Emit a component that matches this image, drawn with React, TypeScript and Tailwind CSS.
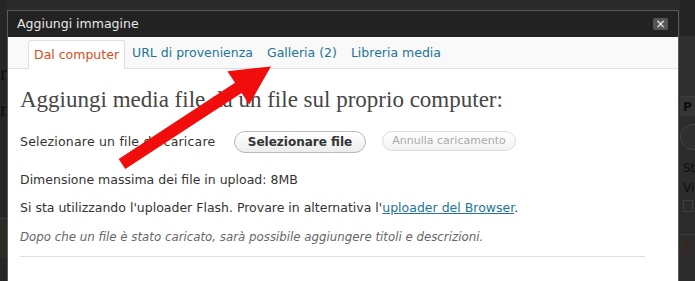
const tabs = ['URL di provenienza', 'Galleria (2)', 'Libreria media'];

function Arrow() {
    // red arrow drawn along x axis, then rotated into place
    return (
        <svg className="pointer-events-none absolute left-0 top-0" width="695" height="281">
            <g transform="translate(122 164) rotate(-33.2)">
                <polygon points="0,-6 139,-6 139,-20 178,0 139,20 139,6 0,6" fill="#f20d0d" />
            </g>
        </svg>
    );
}

export default function App() {
    return (
        <div className="relative flex h-[281px] w-[695px] overflow-hidden bg-[#2a2a2a] font-['DejaVu_Sans',sans-serif]">
            {/* dimmed page behind, left side */}
            <div className="flex w-[7px] shrink-0 flex-col bg-[#262626] pt-[62px] text-[22px] leading-none text-[#0d0d0d]">
                <div className="h-[36px] font-['Liberation_Serif',serif]">r</div>
                <div className="h-[40px] font-['Liberation_Serif',serif] text-[#111]">r</div>
                <div className="mt-[80px] h-[40px] border-t border-[#3a3a3a] bg-[#2e2a26]" />
            </div>

            {/* dialog */}
            <div className="mt-[10px] flex w-[672px] shrink-0 flex-col self-start border border-[#5a5a5a] bg-white">
                <div className="flex h-[26px] items-center justify-between bg-[#222] pl-[9px] pr-[10px]">
                    <span className="text-[12.5px] text-[#e8e8e8]">Aggiungi immagine</span>
                    <span className="flex h-[12px] w-[15px] items-center justify-center rounded-[2px] bg-[#555] text-[12px] leading-none text-white">×</span>
                </div>

                <div className="flex h-[32px] items-end border-b border-[#dfdfdf] bg-[#f9f9f9] pl-[20px]">
                    <div className="-mb-px flex h-[29px] items-center rounded-t-[3px] border border-b-0 border-[#dfdfdf] bg-white px-[5px] text-[12.5px] text-[#d54e21]">
                        Dal computer
                    </div>
                    {tabs.map((t) => (
                        <div key={t} className="flex h-[29px] items-center px-[7px] text-[12.5px] text-[#21759b]">
                            {t}
                        </div>
                    ))}
                </div>

                <div className="flex flex-col px-[12px] pb-[30px] text-[12.5px] text-[#333]">
                    <h3 className="mt-[17px] h-[28px] font-['Liberation_Serif',serif] text-[23px] leading-[28px] text-[#464646]">
                        Aggiungi media file da un file sul proprio computer:
                    </h3>
                    <div className="mt-[17px] flex h-[22px] items-center">
                        <span className="w-[214px] tracking-[0.2px]">Selezionare un file da caricare</span>
                        <button className="flex h-[22px] w-[132px] items-center justify-center rounded-full border border-[#bbb] bg-gradient-to-b from-white to-[#ececec] text-[12px] font-bold text-[#333]">
                            Selezionare file
                        </button>
                        <button className="ml-[16px] flex h-[20px] w-[134px] items-center justify-center self-start rounded-full border border-[#ddd] bg-gradient-to-b from-white to-[#f2f2f2] text-[11px] text-[#aaa]">
                            Annulla caricamento
                        </button>
                    </div>
                    <p className="mt-[18px] h-[18px] leading-[18px]">Dimensione massima dei file in upload: 8MB</p>
                    <p className="mt-[10px] h-[18px] leading-[18px]">
                        Si sta utilizzando l'uploader Flash. Provare in alternativa l'
                        <span className="text-[#21759b] underline">uploader del Browser</span>.
                    </p>
                    <p className="mt-[11px] h-[18px] text-[11.8px] italic leading-[18px] text-[#666]">
                        Dopo che un file è stato caricato, sarà possibile aggiungere titoli e descrizioni.
                    </p>
                    <div className="mt-[10px] w-[625px] border-t border-[#dfdfdf]" />
                </div>
            </div>

            {/* dimmed page behind, right side */}
            <div className="flex flex-1 flex-col bg-[#2c2c2c] pl-[1px] text-[12px] leading-none text-[#0e0e0e]">
                <div className="h-[36px] bg-[#242424]" />
                <div className="h-[60px] bg-[#303030]" />
                <div className="h-[20px] border-t border-[#3b3b3b] bg-[#353535] pl-[3px] pt-[4px] font-bold">P</div>
                <div className="mt-[8px] h-[26px] w-[30px] rounded-full border border-[#444] bg-[#2f2f2f]" />
                <div className="mt-[8px] h-[20px] pl-[3px] pt-[4px]">St</div>
                <div className="h-[20px] pl-[3px] pt-[4px]">Vi</div>
                <div className="ml-[3px] mt-[2px] h-[12px] w-[10px] border border-[#3e3e3e]" />
                <div className="mt-[22px] border-t border-[#3b3b3b] pl-[3px] pt-[6px] text-[#4a1a10]">S</div>
            </div>

            <Arrow />
        </div>
    );
}
